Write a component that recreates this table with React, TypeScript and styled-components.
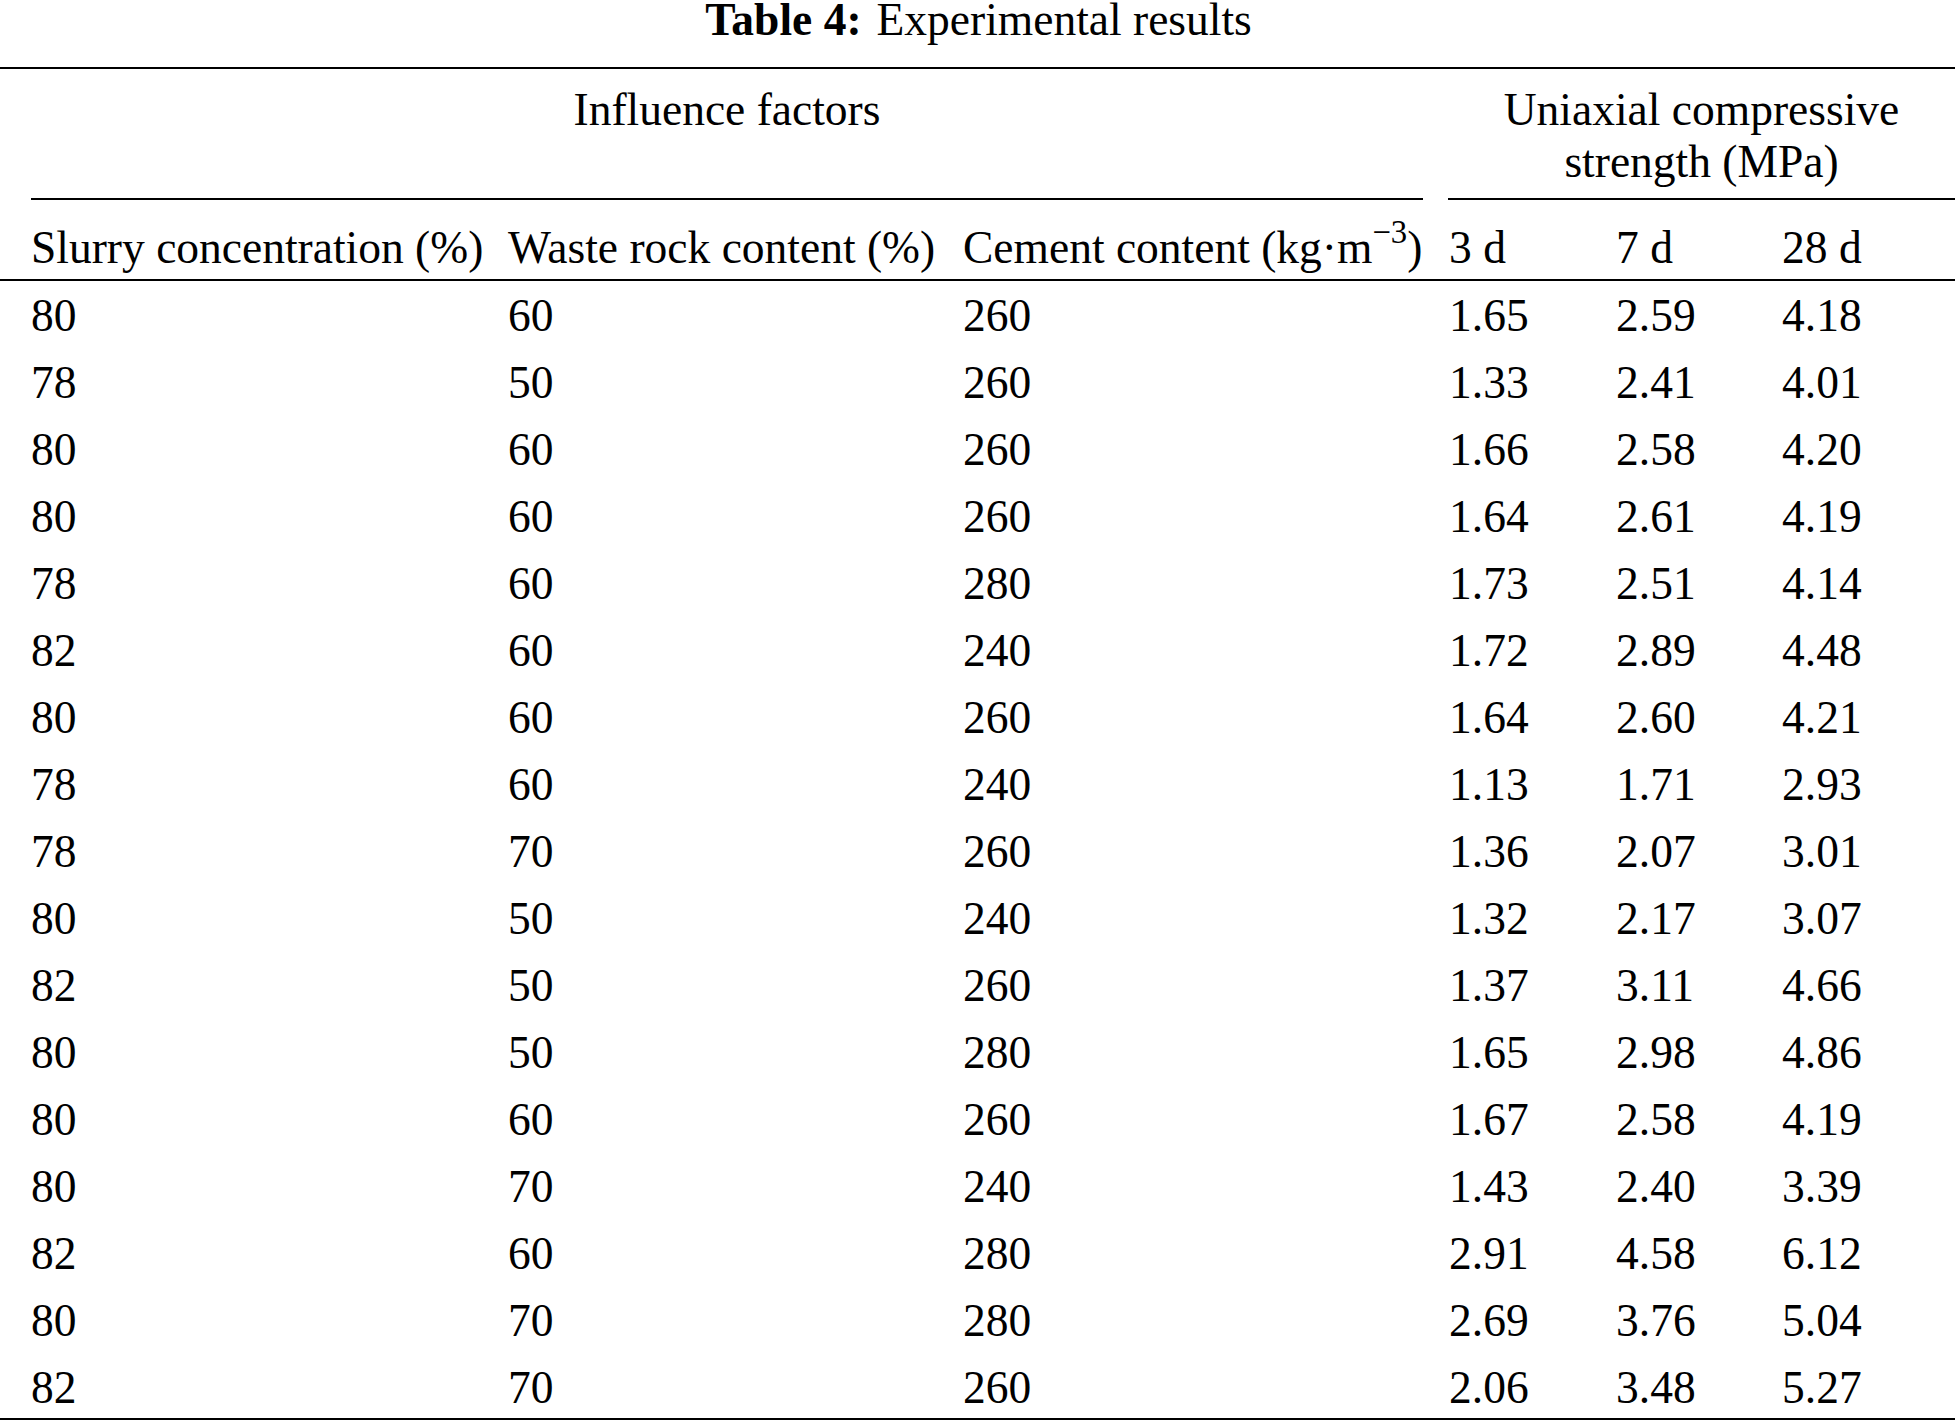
import React from "react";
import styled, { createGlobalStyle } from "styled-components";

const GlobalStyle = createGlobalStyle`
  html, body {
    margin: 0;
    padding: 0;
    background: #fff;
  }
  body {
    font-family: "Liberation Serif", "Times New Roman", serif;
    color: #000;
  }
`;

// shared column layout for every row of the table
const COLUMNS = "477px 455px 486px 167px 166px 1fr";

const Page = styled.div`
  width: 1957px;
  font-size: 45.5px;
`;

const Caption = styled.div`
  text-align: center;
  line-height: 40px;
  height: 40px;
  margin-bottom: 27px;
  white-space: nowrap;
`;

const CaptionLabel = styled.b`
  font-weight: 700;
  margin-right: 15px;
`;

const Table = styled.div`
  width: 1955px;
  border-top: 2px solid #000;
  border-bottom: 2px solid #000;
`;

const Row = styled.div<{ $top?: number; $bottom?: number; $rule?: boolean }>`
  display: grid;
  grid-template-columns: ${COLUMNS};
  padding: ${p => p.$top ?? 0}px 0 ${p => p.$bottom ?? 0}px 31px;
  line-height: 52px;
  white-space: nowrap;
  border-bottom: ${p => (p.$rule ? "2px solid #000" : "none")};
`;

const DataRow = styled(Row)`
  padding-top: 9px;
  padding-bottom: 6px;

  &:last-child {
    padding-bottom: 4px;
  }
`;

const GroupHead = styled.div<{ $side: "left" | "right" }>`
  grid-column: ${p => (p.$side === "left" ? "1 / 4" : "4 / 7")};
  margin: ${p => (p.$side === "left" ? "0 26px 0 0" : "0 0 0 -1px")};
  padding: 15px 0 10px;
  text-align: center;
  border-bottom: 2px solid #000;
`;

const Cell = styled.div`
  text-align: left;
`;

const Sup = styled.span`
  font-size: 0.72em;
  line-height: 0;
  vertical-align: 0.62em;
`;

const rows: string[][] = [
  ["80", "60", "260", "1.65", "2.59", "4.18"],
  ["78", "50", "260", "1.33", "2.41", "4.01"],
  ["80", "60", "260", "1.66", "2.58", "4.20"],
  ["80", "60", "260", "1.64", "2.61", "4.19"],
  ["78", "60", "280", "1.73", "2.51", "4.14"],
  ["82", "60", "240", "1.72", "2.89", "4.48"],
  ["80", "60", "260", "1.64", "2.60", "4.21"],
  ["78", "60", "240", "1.13", "1.71", "2.93"],
  ["78", "70", "260", "1.36", "2.07", "3.01"],
  ["80", "50", "240", "1.32", "2.17", "3.07"],
  ["82", "50", "260", "1.37", "3.11", "4.66"],
  ["80", "50", "280", "1.65", "2.98", "4.86"],
  ["80", "60", "260", "1.67", "2.58", "4.19"],
  ["80", "70", "240", "1.43", "2.40", "3.39"],
  ["82", "60", "280", "2.91", "4.58", "6.12"],
  ["80", "70", "280", "2.69", "3.76", "5.04"],
  ["82", "70", "260", "2.06", "3.48", "5.27"],
];

export default function App() {
  return (
    <Page>
      <GlobalStyle />
      <Caption>
        <CaptionLabel>Table 4:</CaptionLabel>Experimental results
      </Caption>
      <Table>
        <Row>
          <GroupHead $side="left">Influence factors</GroupHead>
          <GroupHead $side="right">
            Uniaxial compressive
            <br />
            strength (MPa)
          </GroupHead>
        </Row>
        <Row $top={22} $bottom={5} $rule>
          <Cell>Slurry concentration (%)</Cell>
          <Cell>Waste rock content (%)</Cell>
          <Cell>
            Cement content (kg·m<Sup>−3</Sup>)
          </Cell>
          <Cell>3 d</Cell>
          <Cell>7 d</Cell>
          <Cell>28 d</Cell>
        </Row>
        {rows.map((r, i) => (
          <DataRow key={i}>
            {r.map((v, j) => (
              <Cell key={j}>{v}</Cell>
            ))}
          </DataRow>
        ))}
      </Table>
    </Page>
  );
}
